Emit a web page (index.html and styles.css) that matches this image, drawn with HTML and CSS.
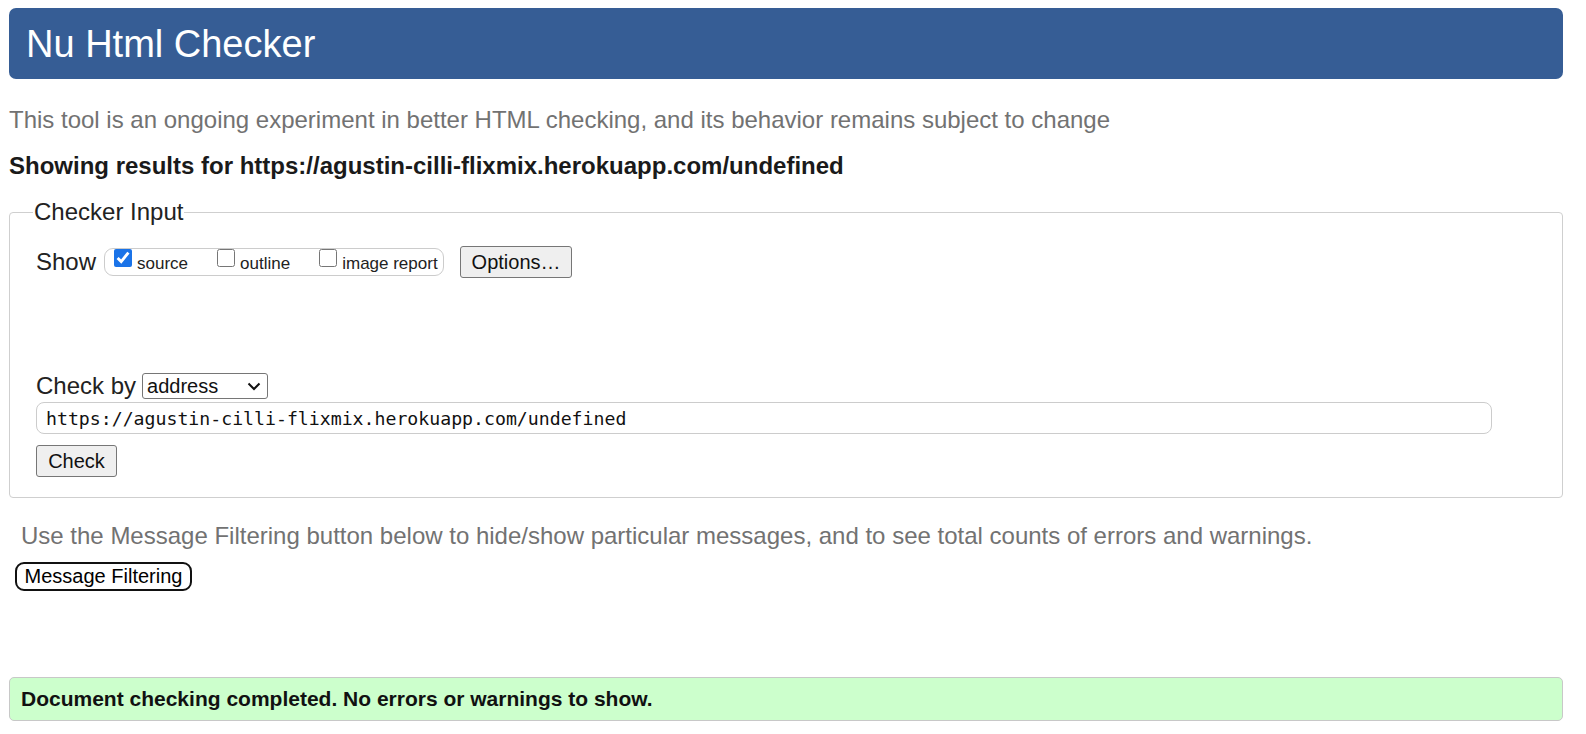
FILE: index.html
```html
<!DOCTYPE html>
<html>
<head>
<meta charset="utf-8">
<title>Nu Html Checker</title>
<link rel="stylesheet" href="styles.css">
</head>
<body>
<header class="banner"><h1 class="title">Nu Html Checker</h1></header>
<p class="intro">This tool is an ongoing experiment in better HTML checking, and its behavior remains subject to change</p>
<p class="showing">Showing results for https://agustin-cilli-flixmix.herokuapp.com/undefined</p>
<fieldset class="input-box">
  <legend class="legend">Checker Input</legend>
  <div class="show-row">
    <span class="label">Show</span>
    <div class="pill">
      <label class="opt"><input type="checkbox" class="cb" checked><span class="opt-text">source</span></label>
      <label class="opt"><input type="checkbox" class="cb"><span class="opt-text">outline</span></label>
      <label class="opt"><input type="checkbox" class="cb"><span class="opt-text">image report</span></label>
    </div>
    <button class="btn options">Options…</button>
  </div>
  <div class="checkby-row">
    <span class="label">Check by</span>
    <span class="sel-wrap">
      <select class="sel"><option>address</option></select>
      <svg class="chev" width="14" height="9" viewBox="0 0 14 9"><path d="M1.5 1.5 L7 7 L12.5 1.5" fill="none" stroke="#111" stroke-width="2"/></svg>
    </span>
  </div>
  <input class="url" type="text" value="https://agustin-cilli-flixmix.herokuapp.com/undefined">
  <div><button class="btn check">Check</button></div>
</fieldset>
<p class="filter-note">Use the Message Filtering button below to hide/show particular messages, and to see total counts of errors and warnings.</p>
<button class="filter-btn">Message Filtering</button>
<div class="success">Document checking completed. No errors or warnings to show.</div>
</body>
</html>
```
FILE: styles.css
```css
html, body { margin: 0; padding: 0; background: #fff; }
body {
  font-family: "Liberation Sans", Arial, sans-serif;
  color: #222;
  padding: 8px 23px 0 9px;
}
.banner {
  background: #365d95;
  border-radius: 7px;
  height: 71px;
  display: flex;
  align-items: center;
  padding-left: 17px;
}
.title {
  margin: 0;
  color: #fff;
  font-weight: normal;
  font-size: 38px;
  line-height: 1;
}
.intro {
  margin: 26px 0 0;
  color: #727272;
  font-size: 24px;
  line-height: 30px;
}
.showing {
  margin: 17px 0 0;
  font-weight: bold;
  font-size: 24px;
  line-height: 28px;
  color: #1a1a1a;
}
.input-box {
  margin: 18px 0 0;
  border: 1px solid #cfcfcf;
  border-radius: 4px;
  padding: 0 26px 20px 26px;
  min-width: 0;
}
.legend {
  font-size: 24px;
  line-height: 28px;
  padding: 0 1px;
  margin-left: -3px;
  color: #222;
}
.label { font-size: 24px; color: #222; }
.show-row {
  display: flex;
  align-items: center;
  margin-top: 20px;
  height: 32px;
}
.pill {
  box-sizing: border-box;
  margin-left: 8px;
  border: 1px solid #ccc;
  border-radius: 9px;
  height: 28px;
  width: 340px;
  display: flex;
  align-items: flex-start;
  padding-left: 9px;
}
.opt {
  font-size: 17px;
  display: flex;
  align-items: flex-start;
  color: #222;
  margin-right: 29px;
}
.opt:last-child { margin-right: 0; }
.opt-text {
  line-height: 20px;
  padding-top: 5px;
}
.cb {
  width: 18px;
  height: 18px;
  margin: 0 5px 0 0;
  accent-color: #1a73e8;
}
.btn {
  font-family: "Liberation Sans", Arial, sans-serif;
  background: #efefef;
  border: 1px solid #767676;
  border-radius: 3px;
  color: #111;
}
.options {
  margin-left: 16px;
  font-size: 20px;
  height: 32px;
  width: 112px;
  padding: 0;
}
.checkby-row {
  display: flex;
  align-items: center;
  margin-top: 94px;
  height: 28px;
}
.sel-wrap {
  position: relative;
  display: inline-flex;
  margin-left: 6px;
}
.sel {
  appearance: none;
  -webkit-appearance: none;
  font-family: "Liberation Sans", Arial, sans-serif;
  font-size: 20px;
  height: 26px;
  width: 126px;
  border: 1px solid #767676;
  border-radius: 3px;
  background: #fff;
  color: #111;
  padding: 0 4px;
  line-height: 24px;
}
.chev {
  position: absolute;
  right: 7px;
  top: 9px;
  pointer-events: none;
}
.url {
  display: block;
  box-sizing: border-box;
  margin-top: 2px;
  width: 1456px;
  height: 32px;
  border: 1px solid #ccc;
  border-radius: 8px;
  font-family: "DejaVu Sans Mono", monospace;
  font-size: 18.2px;
  padding: 0 9px;
  color: #111;
}
.check {
  margin-top: 11px;
  font-size: 20px;
  height: 32px;
  width: 81px;
  padding: 0;
}
.filter-note {
  margin: 23px 0 0 12px;
  color: #727272;
  font-size: 24px;
  line-height: 30px;
}
.filter-btn {
  display: block;
  margin: 11px 0 0 6px;
  font-family: "Liberation Sans", Arial, sans-serif;
  font-size: 20px;
  background: #fff;
  border: 2px solid #111;
  border-radius: 9px;
  height: 29px;
  width: 177px;
  padding: 0;
  color: #000;
}
.success {
  margin-top: 86px;
  background: #ccffcc;
  border: 1px solid #c8c8c8;
  border-radius: 5px;
  height: 42px;
  display: flex;
  align-items: center;
  padding-left: 11px;
  font-weight: bold;
  font-size: 21px;
  color: #111;
}
```
